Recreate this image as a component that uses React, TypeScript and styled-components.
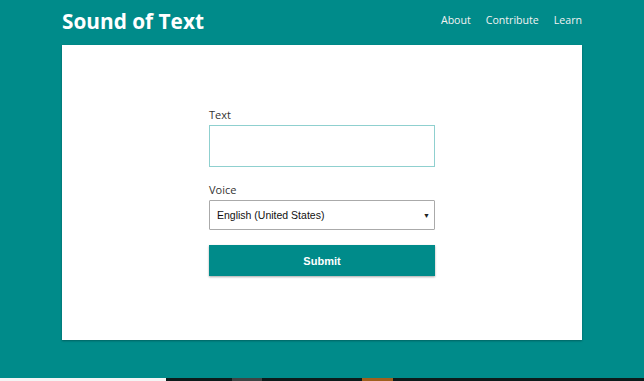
import styled, { createGlobalStyle } from 'styled-components';

const TEAL = '#008b8a';

const GlobalStyle = createGlobalStyle`
  html, body {
    margin: 0;
    padding: 0;
    background: ${TEAL};
    font-family: 'Open Sans', sans-serif;
  }
`;

const Page = styled.div`
  width: 644px;
  height: 381px;
  display: flex;
  flex-direction: column;
  background: ${TEAL};
  overflow: hidden;
`;

const Header = styled.header`
  height: 45px;
  padding: 0 62px;
  display: flex;
  align-items: center;
  justify-content: space-between;
  box-sizing: border-box;
`;

const Title = styled.h1`
  margin: 0;
  padding-bottom: 4px;
  font-size: 20.8px;
  font-weight: 700;
  color: #fff;
`;

const Nav = styled.nav`
  display: flex;
  gap: 15px;
  padding-bottom: 5px;
`;

const NavLink = styled.a`
  font-size: 10.6px;
  color: #f2f2f2;
  text-decoration: none;
`;

const Card = styled.main`
  margin: 0 62px;
  height: 295px;
  background: #fff;
  box-shadow: 0 1px 2px rgba(0, 0, 0, 0.3);
  display: flex;
  justify-content: center;
  padding-top: 62px;
  box-sizing: border-box;
`;

const Form = styled.form`
  width: 226px;
  display: flex;
  flex-direction: column;
`;

const Label = styled.label`
  font-size: 11px;
  color: #333;
  line-height: 16px;
  margin-bottom: 2px;
`;

const TextBox = styled.input`
  height: 42px;
  box-sizing: border-box;
  border: 1px solid #8fd0cf;
  margin: 0 0 15px;
  outline: none;
`;

const SelectBox = styled.div`
  height: 30px;
  box-sizing: border-box;
  border: 1px solid #aaa;
  border-radius: 1px;
  display: flex;
  align-items: center;
  justify-content: space-between;
  padding: 0 4px 0 7px;
  font-family: 'Liberation Sans', Arial, sans-serif;
  font-size: 10.5px;
  color: #111;
  margin-bottom: 15px;
`;

const Caret = styled.span`
  font-size: 7px;
  color: #222;
`;

const SubmitButton = styled.button`
  height: 31px;
  border: none;
  background: ${TEAL};
  color: #fff;
  font-family: 'Liberation Sans', Arial, sans-serif;
  font-weight: 700;
  font-size: 11px;
  box-shadow: 0 1px 2px rgba(0, 0, 0, 0.35);
  cursor: pointer;
`;

const Spacer = styled.div`
  flex: 1;
`;

const Strip = styled.div`
  height: 3px;
  display: flex;
`;

const StripPart = styled.div<{ $w: number; $c: string }>`
  width: ${(p) => p.$w}px;
  background: ${(p) => p.$c};
  flex-shrink: 0;
`;

export default function App() {
  return (
    <Page>
      <GlobalStyle />
      <Header>
        <Title>Sound of Text</Title>
        <Nav>
          <NavLink>About</NavLink>
          <NavLink>Contribute</NavLink>
          <NavLink>Learn</NavLink>
        </Nav>
      </Header>
      <Card>
        <Form onSubmit={(e) => e.preventDefault()}>
          <Label>Text</Label>
          <TextBox type="text" />
          <Label>Voice</Label>
          <SelectBox>
            <span>English (United States)</span>
            <Caret>▼</Caret>
          </SelectBox>
          <SubmitButton type="submit">Submit</SubmitButton>
        </Form>
      </Card>
      <Spacer />
      <Strip>
        <StripPart $w={166} $c="#f4f4f4" />
        <StripPart $w={66} $c="#0c1b1b" />
        <StripPart $w={30} $c="#3e4444" />
        <StripPart $w={100} $c="#0c1b1b" />
        <StripPart $w={31} $c="#a0601e" />
        <StripPart $w={251} $c="#0c1b1b" />
      </Strip>
    </Page>
  );
}
